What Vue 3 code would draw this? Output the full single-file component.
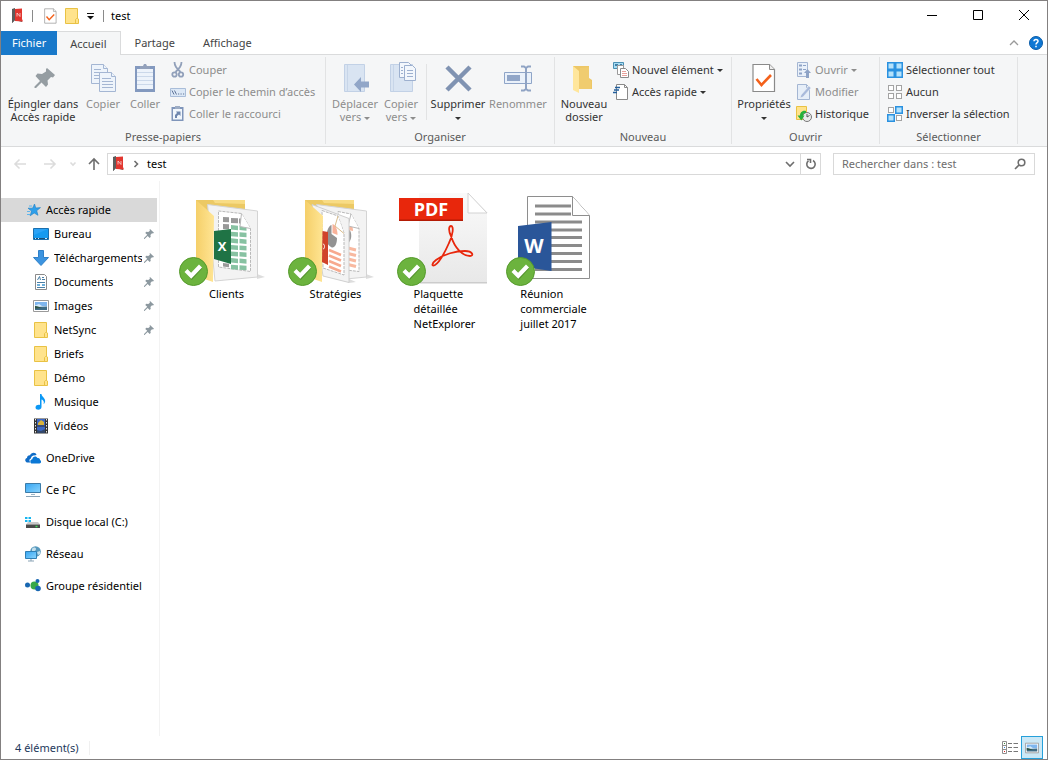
<template>
  <div class="window">
    <svg class="sprite" aria-hidden="true">
      <defs>
        <linearGradient id="g-folder" x1="0" y1="0" x2="1" y2="0">
          <stop offset="0" stop-color="#f5cf69" />
          <stop offset="1" stop-color="#ffe594" />
        </linearGradient>
        <linearGradient id="g-page" x1="0" y1="0" x2="0" y2="1">
          <stop offset="0" stop-color="#fafafa" />
          <stop offset="1" stop-color="#e8e8e8" />
        </linearGradient>
        <linearGradient id="g-screen" x1="0" y1="0" x2="1" y2="1">
          <stop offset="0" stop-color="#35a5f2" />
          <stop offset="1" stop-color="#8bd4fd" />
        </linearGradient>
      </defs>

      <symbol id="i-net" viewBox="0 0 12 16">
        <path d="M1 1l3-1v12l-3 3z" fill="#555" />
        <path d="M3 1h8v13L4 12l-3 3V2z" fill="#5d5d5d" />
        <path d="M4 1l7-.6V11l1 2.6L4 13z" fill="#e2362f" />
        <path d="M6 8.500V5l3 3.500V5" fill="none" stroke="#fff" stroke-opacity=".7" stroke-width=".9" />
      </symbol>
      <symbol id="i-folder" viewBox="0 0 14 16">
        <path d="M.5.5h12v10l1 .5v4.500H.5z" fill="#ffe38c" stroke="#e9c244" />
        <path d="M10.500 15V11.500l1-1h1" fill="none" stroke="#e9c244" />
      </symbol>
      <symbol id="i-check" viewBox="0 0 24 30">
        <path d="M1 1.500h16.500l5 5V28.500H1z" fill="#fff" stroke="#8a8a8a" stroke-width="1.200" />
        <path d="M17.500 1.500v5h5" fill="#eee" stroke="#8a8a8a" />
        <path d="M4.500 16l5 6L19 12" fill="none" stroke="#f4611b" stroke-width="2.600" />
      </symbol>
      <symbol id="i-pin" viewBox="0 0 20 20">
        <path d="M12 0l8 7.500-2 1.500-2-.3-3.200 3.300.7 3.500-2 2.500-4.200-4.200L1 19.800 0 20v-2l6.500-6.300L2.500 8l2-2.500 4 .7L12 3.500 11 2z" fill="#8c989f" />
      </symbol>
      <symbol id="i-ok" viewBox="0 0 29 29">
        <circle cx="14.500" cy="14.500" r="14" fill="#6cb33e" stroke="#559a2c" />
        <path d="M8 14l4.800 5.500L21.500 10" fill="none" stroke="#39701b" stroke-opacity=".5" stroke-width="4.500" />
        <path d="M7 13.500l5.200 5.200L21.500 9" fill="none" stroke="#fff" stroke-width="4.200" />
      </symbol>
      <symbol id="i-caret" viewBox="0 0 6 3">
        <path d="M0 0h6L3 3z" fill="currentColor" />
      </symbol>
      <symbol id="i-picture" viewBox="0 0 16 12">
        <path d="M.5.5h15v11H.5z" fill="#fff" stroke="#9a9a9a" />
        <path d="M2 2h12v4H2z" fill="#7fb6ee" />
        <path d="M2 5.500l4-1.500 3 2h5v1H2z" fill="#d6ebfa" />
        <path d="M2 6l3 1 9-.5V10H2z" fill="#3f6c86" />
        <path d="M2 6l3 .5 4 1.500-7 .5z" fill="#2f5545" />
      </symbol>
    </svg>

    <header class="titlebar">
      <svg class="logo" width="12" height="16"><use href="#i-net" /></svg>
      <span class="bar"></span>
      <button type="button" aria-label="Propriétés" class="quick">
        <svg width="13" height="16"><use href="#i-check" /></svg>
      </button>
      <button type="button" aria-label="Nouveau dossier" class="quick">
        <svg width="14" height="16"><use href="#i-folder" /></svg>
      </button>
      <button type="button" aria-label="Personnaliser" class="quick more">
        <svg width="7" height="7" viewBox="0 0 7 7">
          <path d="M0 .5h7" stroke="#111" />
          <path d="M0 3h7L3.500 6.500z" fill="#111" />
        </svg>
      </button>
      <span class="bar"></span>
      <h1>test</h1>
      <div class="controls">
        <button type="button" aria-label="Réduire">
          <svg width="12" height="12" viewBox="0 0 12 12"><path d="M1 5.500h10" /></svg>
        </button>
        <button type="button" aria-label="Agrandir">
          <svg width="12" height="12" viewBox="0 0 12 12"><path d="M1.500.5h9v9h-9z" /></svg>
        </button>
        <button type="button" aria-label="Fermer">
          <svg width="12" height="12" viewBox="0 0 12 12"><path d="M1 0l10 10M11 0L1 10" /></svg>
        </button>
      </div>
    </header>

    <nav class="tabs">
      <button
        v-for="tab in tabs"
        :key="tab"
        type="button"
        :class="{ file: tab === 'Fichier', active: tab === activeTab }"
        @click="selectTab(tab)"
      >
        {{ tab }}
      </button>
      <div class="tabs-end">
        <button type="button" aria-label="Réduire le ruban">
          <svg width="10" height="6" viewBox="0 0 10 6">
            <path d="M1 5l4-4 4 4" fill="none" stroke="#9a9a9a" stroke-width="1.300" />
          </svg>
        </button>
        <button type="button" aria-label="Aide">
          <svg width="14" height="14" viewBox="0 0 14 14">
            <circle cx="7" cy="7" r="6.500" fill="#0f78d4" stroke="#0a5ca8" />
            <path d="M5 5.300C5 3 9 3 9 5.200 9 6.800 7 6.600 7 8.600M7 9.700v1.500" fill="none" stroke="#fff" stroke-width="1.500" />
          </svg>
        </button>
      </div>
    </nav>

    <div class="ribbon">
      <section class="group clipboard">
        <div class="tools">
          <button type="button" class="large">
            <svg width="32" height="32" viewBox="0 0 32 32">
              <path d="M20 6l8 7-2 2.500-2-.4-3.500 3.400.5 4-2 2.500-4.500-4.500L9 26H7.500v-1.500l5.500-5.500L8.500 14l2-2.500 4.500.5L19 9.500V7z" fill="#959da2" />
            </svg>
            <span>Épingler dans<br />Accès rapide</span>
          </button>
          <button type="button" class="large" disabled>
            <svg width="32" height="32" viewBox="0 0 32 32">
              <g fill="#eef4fb" stroke="#a4b6d3">
                <path d="M4.500 2.500h12l4 4v15h-16z" />
                <path d="M16.500 2.500v4h4M7 7.500h7M7 10.500h6M7 13.500h6M7 16.500h6" />
                <path d="M12.500 10.500h12l4 4v15h-16z" />
                <path d="M24.500 10.500v4h4M15 16.500h9M15 19.500h11M15 22.500h11M15 25.500h11" />
              </g>
            </svg>
            <span>Copier</span>
          </button>
          <button type="button" class="large" disabled>
            <svg width="32" height="32" viewBox="0 0 32 32">
              <path d="M6 4h20v26H6z" fill="#8399bf" />
              <path d="M8 7h16v20H8z" fill="#edf3fb" />
              <path d="M8 10.500h16M8 14.500h16M8 18.500h16M8 22.500h16" stroke="#cbd8ea" />
              <path d="M11 7V4h3l1-2h2l1 2h3v3z" fill="#93a1bb" />
            </svg>
            <span>Coller</span>
          </button>
          <div class="stack">
            <button type="button" disabled>
              <svg width="16" height="16" viewBox="0 0 16 16" fill="none" stroke="#91a0ba">
                <path d="M4.500 0c0 4 2 6 6 10M11.500 0c0 4-2 6-6 10" stroke-width="1.800" />
                <circle cx="4.500" cy="12.500" r="2.200" stroke-width="1.800" />
                <circle cx="11" cy="12.500" r="2.200" stroke-width="1.800" />
              </svg>
              Couper
            </button>
            <button type="button" disabled>
              <svg width="16" height="16" viewBox="0 0 16 16">
                <path d="M.5 4.500h15v8H.5z" fill="#dce8f6" stroke="#a9bdd9" />
                <path d="M2 6.500l2 4M4.500 6.500l2 4M8 10h1.200M10.500 10h1.200M13 10h1.200" stroke="#5f7499" fill="none" />
              </svg>
              Copier le chemin d’accès
            </button>
            <button type="button" disabled>
              <svg width="16" height="16" viewBox="0 0 16 16">
                <path d="M1.500 1h12v14h-12z" fill="#7f95ba" />
                <path d="M3 3h9v10.500H3z" fill="#f1f6fc" />
                <path d="M5 0h5v3H5z" fill="#9dacc4" />
                <path d="M5 12V9l2-2-1-1.500h4.500V10L9 8.500 7 10v2z" fill="#6e86ae" />
              </svg>
              Coller le raccourci
            </button>
          </div>
        </div>
        <h2>Presse-papiers</h2>
      </section>

      <section class="group organize">
        <div class="tools">
          <button type="button" class="large" disabled>
            <svg width="32" height="32" viewBox="0 0 32 32">
              <path d="M5.500 2.500h20v27h-20z" fill="#d9e4f2" stroke="#c2d1e6" />
              <path d="M8.500 3v26" stroke="#c7d5e8" />
              <path d="M15 22.500l7-7.500v4.500h8v6h-8V30z" fill="#91a6c8" />
            </svg>
            <span>Déplacer<br />vers <svg class="caret"><use href="#i-caret" /></svg></span>
          </button>
          <button type="button" class="large" disabled>
            <svg width="32" height="32" viewBox="0 0 32 32">
              <path d="M5.500 2.500h22v27h-22z" fill="#d9e4f2" stroke="#c2d1e6" />
              <path d="M8.500 3v26" stroke="#c7d5e8" />
              <g fill="#f3f7fc" stroke="#9db0cf">
                <path d="M14.500.5h9l3 3v12h-12z" />
                <path d="M19.500 3.500h8l3 3v12h-11z" />
                <path d="M22 8.500h6M22 11.500h6M22 14.500h6M16 5.500h2M16 8.500h2M16 11.500h2" />
              </g>
            </svg>
            <span>Copier<br />vers <svg class="caret"><use href="#i-caret" /></svg></span>
          </button>
          <span class="divider"></span>
          <button type="button" class="large">
            <svg width="32" height="32" viewBox="0 0 32 32">
              <path d="M5 5l23 23M28 5L5 28" stroke="#8093b2" stroke-width="4.500" />
            </svg>
            <span>Supprimer<br /><svg class="caret"><use href="#i-caret" /></svg></span>
          </button>
          <button type="button" class="large" disabled>
            <svg width="32" height="32" viewBox="0 0 32 32">
              <path d="M2.500 10.500h27v11h-27z" fill="#eaf1fa" stroke="#8fa5c8" />
              <path d="M5 13h13v6H5z" fill="#91a6c8" />
              <path d="M19 4.500h3l2 1.500 2-1.500h3M24 6v21M19 28.500h3l2-1.500 2 1.500h3" fill="none" stroke="#8fa3c4" stroke-width="2" />
            </svg>
            <span>Renommer</span>
          </button>
        </div>
        <h2>Organiser</h2>
      </section>

      <section class="group create">
        <div class="tools">
          <button type="button" class="large">
            <svg width="32" height="32" viewBox="0 0 32 32">
              <path d="M5 4h16v12l3 2v9H5z" fill="#edc767" />
              <path d="M12 6l9-1v12l2 2v8H10z" fill="#f0cc6f" />
              <path d="M5 4l6 5v22l-6-3z" fill="#ffe69b" />
            </svg>
            <span>Nouveau<br />dossier</span>
          </button>
          <div class="stack">
            <button type="button">
              <svg width="16" height="16" viewBox="0 0 16 16">
                <path d="M.5.5h10v6H.5z" fill="#a8dcf3" stroke="#4a8fb3" />
                <path d="M2 2h3v2H2zM7 2h2v2H7z" fill="#3e7fa8" />
                <path d="M4.500 3.500h6v9h-6z" fill="#fff" stroke="#9a9a9a" />
                <path d="M7.500 6.500h5l3 3v6h-8z" fill="#fff" stroke="#8a8a8a" />
                <path d="M9 9.500h4M9 11.500h5M9 13.500h5" stroke="#e8a09a" />
              </svg>
              Nouvel élément
              <svg class="caret"><use href="#i-caret" /></svg>
            </button>
            <button type="button">
              <svg width="16" height="16" viewBox="0 0 16 16">
                <path d="M3.500.5h8l3 3v12h-11z" fill="#fff" stroke="#8a8a8a" />
                <path d="M11.500.5v3h3" fill="none" stroke="#8a8a8a" />
                <path d="M2 3.500h5M1 6h5M0 8.500h4" stroke="#235f9c" stroke-width="1.300" />
              </svg>
              Accès rapide
              <svg class="caret"><use href="#i-caret" /></svg>
            </button>
          </div>
        </div>
        <h2>Nouveau</h2>
      </section>

      <section class="group open">
        <div class="tools">
          <button type="button" class="large">
            <svg width="32" height="32" viewBox="-4 -1 32 32"><use href="#i-check" width="24" height="30" /></svg>
            <span>Propriétés<br /><svg class="caret"><use href="#i-caret" /></svg></span>
          </button>
          <div class="stack">
            <button type="button" disabled>
              <svg width="16" height="16" viewBox="0 0 16 16">
                <path d="M1.500.5h10v14h-10z" fill="#eaf1fa" stroke="#a4b6d3" />
                <path d="M3 2.500h3v2H3zM3 6.500h3v2H3zM3 10.500h3v2H3z" fill="#8ea3c6" />
                <path d="M7 3.500h3M7 7.500h3" stroke="#8ea3c6" />
                <path d="M11.500 7L15 11h-2v5h-3v-5H8z" fill="#8ea3c6" />
              </svg>
              Ouvrir
              <svg class="caret"><use href="#i-caret" /></svg>
            </button>
            <button type="button" disabled>
              <svg width="16" height="16" viewBox="0 0 16 16">
                <path d="M1.500.5h9l3 3v12h-12z" fill="#e6eef8" stroke="#a4b6d3" />
                <path d="M10.500.5v3h3" fill="none" stroke="#a4b6d3" />
                <path d="M4 14l1-3 8-9 2 2-8 9z" fill="#a9badb" stroke="#f5f6f7" stroke-width=".5" />
              </svg>
              Modifier
            </button>
            <button type="button">
              <svg width="16" height="16" viewBox="0 0 16 16">
                <path d="M.5.5h10v13H.5z" fill="#ffe38c" stroke="#e9c244" />
                <circle cx="11" cy="11" r="4.500" fill="#ececec" stroke="#777" />
                <path d="M11 8v3l2.500-1.500" fill="none" stroke="#555" />
                <path d="M10 5C6 4 4 7 4 9.500H1.500l3.800 5 3.200-5H7C7 8 8 6.800 10 7z" fill="#27b13a" />
              </svg>
              Historique
            </button>
          </div>
        </div>
        <h2>Ouvrir</h2>
      </section>

      <section class="group select">
        <div class="tools">
          <div class="stack">
            <button v-for="s in selections" :key="s.label" type="button">
              <svg width="16" height="16" viewBox="0 0 16 16">
                <rect
                  v-for="(on, i) in s.cells"
                  :key="i"
                  :x="(i % 2) * 8 + (on ? 0.75 : 1.5)"
                  :y="Math.floor(i / 2) * 8 + (on ? 0.75 : 1.5)"
                  :width="on ? 6.5 : 5"
                  :height="on ? 6.5 : 5"
                  :fill="on ? '#b5e2fb' : '#fff'"
                  :stroke="on ? '#2a91e0' : '#a3a3a3'"
                  :stroke-width="on ? 1.5 : 1"
                />
              </svg>
              {{ s.label }}
            </button>
          </div>
        </div>
        <h2>Sélectionner</h2>
      </section>
    </div>

    <div class="location">
      <button type="button" aria-label="Précédent" disabled>
        <svg width="14" height="12" viewBox="0 0 14 12"><path d="M13 6H2M6.500 1.500L2 6l4.500 4.500" /></svg>
      </button>
      <button type="button" aria-label="Suivant" disabled>
        <svg width="14" height="12" viewBox="0 0 14 12"><path d="M1 6h11M7.500 1.500L12 6l-4.500 4.500" /></svg>
      </button>
      <button type="button" aria-label="Emplacements récents" class="narrow" disabled>
        <svg width="8" height="6" viewBox="0 0 8 6"><path d="M1.500 1.500L4 4l2.500-2.500" /></svg>
      </button>
      <button type="button" aria-label="Dossier parent" class="up">
        <svg width="14" height="14" viewBox="0 0 14 14"><path d="M7 13V2M2 7l5-5 5 5" /></svg>
      </button>
      <div class="address">
        <svg width="12" height="16"><use href="#i-net" /></svg>
        <svg class="chevron" width="6" height="8" viewBox="0 0 6 8"><path d="M1.500 1l3 3-3 3" /></svg>
        <button type="button" class="crumb">test</button>
        <button type="button" class="history" aria-label="Afficher les emplacements">
          <svg width="10" height="8" viewBox="0 0 10 8"><path d="M1 2l4 4 4-4" /></svg>
        </button>
        <button type="button" class="refresh" aria-label="Actualiser">
          <svg width="12" height="12" viewBox="0 0 12 12">
            <path d="M8 2.500a4.200 4.200 0 1 1-4.500.3M2 1.500h3.500V5" />
          </svg>
        </button>
      </div>
      <div class="search">
        <input
          v-model="query"
          type="text"
          placeholder="Rechercher dans : test"
          aria-label="Rechercher dans : test"
        />
        <svg width="12" height="12" viewBox="0 0 12 12">
          <circle cx="7.500" cy="4.500" r="3.300" />
          <path d="M5 7L1 11" />
        </svg>
      </div>
    </div>

    <main class="content">
      <nav class="sidebar">
        <a href="#" class="current">
          <svg width="16" height="16" viewBox="0 0 16 16">
            <path d="M9.500 2l1.300 4 4.700-.4-3.800 3.100 1.300 4.600-3.800-2.300-4 2.800 1.300-4.800L3 6.200h4.600z" fill="#2e9fea" stroke="#1c7fc6" stroke-width=".6" />
            <path d="M4 4h3M2 9.500h3M2 12.500h3" stroke="#5fb5ec" />
          </svg>
          <span>Accès rapide</span>
        </a>
        <a v-for="item in places" :key="item.name" href="#" class="child">
          <svg v-if="item.icon === 'desktop'" width="16" height="16" viewBox="0 0 16 16">
            <path d="M.5 2.500h15v11H.5z" fill="#2ba3f6" stroke="#1b6fae" />
            <path d="M1 13V9l14-6v10z" fill="#159af0" />
            <path d="M1 12.500h14" stroke="#174e78" />
            <path d="M2 12.500h1M5 12.500h1M12 12.500h2" stroke="#cfe9fa" />
          </svg>
          <svg v-else-if="item.icon === 'download'" width="16" height="16" viewBox="0 0 16 16">
            <path d="M5.500.5h5v7h5L8 15.500.5 7.500h5z" fill="#3c94e0" stroke="#2f80c8" />
          </svg>
          <svg v-else-if="item.icon === 'document'" width="16" height="16" viewBox="0 0 16 16">
            <path d="M2.500.5h9l2 2v13h-11z" fill="#fff" stroke="#8a8a8a" />
            <path d="M4.500 6l2-3.500 1 3.500M9 3.500h2M9 5.500h3M4 8.500h8M4 13.500h8" stroke="#4a7fa5" fill="none" />
            <path d="M4 11h3M9 11h3" stroke="#3f97cf" stroke-width="1.500" />
          </svg>
          <svg v-else-if="item.icon === 'picture'" width="16" height="12"><use href="#i-picture" /></svg>
          <svg v-else-if="item.icon === 'music'" width="16" height="16" viewBox="0 0 16 16">
            <path d="M7 0h1.500c0 3 4.500 4 3.500 8-.3 1-1 2-1.500 2 1-3-.5-4-2-4.500V13c0 3.500-6 3.500-6 .5C2.500 11 5.500 10.500 7 11z" fill="#0b98f5" />
          </svg>
          <svg v-else-if="item.icon === 'video'" width="16" height="16" viewBox="0 0 16 16">
            <path d="M1 .5h14v15H1z" fill="#333" />
            <path d="M4 1h8v6.500H4zM4 8.500h8V15H4z" fill="#3c67c4" />
            <path d="M5 5l3-3 3 2v3H5z" fill="#d9b23a" />
            <path d="M4 12l4 1 4-2v4H4z" fill="#33486a" />
            <path d="M2.500 1v14M13.500 1v14" stroke="#e6e6e6" stroke-dasharray="1.500 1.500" />
          </svg>
          <svg v-else width="16" height="16" viewBox="-1 0 16 16"><use href="#i-folder" width="14" height="16" /></svg>
          <span>{{ item.name }}</span>
          <svg v-if="item.pinned" class="pin" width="10" height="10"><use href="#i-pin" /></svg>
        </a>

        <a href="#" class="root">
          <svg width="16" height="16" viewBox="0 0 16 16">
            <path d="M5.500 12.500H3C-.5 12.500-.5 8.500 2 8c0-2 2-3 3-2.500C6 2 11 2 11.500 5L9 5.500C6.500 5.500 6 8 6 8.500c-2 .5-2 3-.5 4z" fill="#0f6cc7" />
            <path d="M7 13.500c-2 0-2.500-4 .3-4.200C7.500 6 11.500 5.500 12.500 8c2-.3 2.500 1 2.500 2 1.500.5 1.500 3.500-.5 3.500z" fill="#0a78d6" />
          </svg>
          <span>OneDrive</span>
        </a>
        <a href="#" class="root">
          <svg width="16" height="16" viewBox="0 0 16 16">
            <path d="M.5 1.500h15v9H.5z" fill="url(#g-screen)" stroke="#3d7ca8" />
            <path d="M6 12.500h4" stroke="#9db5c6" />
            <path d="M1 14.500h14" stroke="#8aa3b5" />
          </svg>
          <span>Ce PC</span>
        </a>
        <a href="#" class="root">
          <svg width="16" height="16" viewBox="0 0 16 16">
            <path d="M0 3h2.500v2H0zM3.500 3H6v2H3.500zM0 6h2.500v2H0zM3.500 6H6v2H3.500z" fill="#16b5ef" />
            <path d="M3 8h10l2 2.500H1z" fill="#c9c9c9" />
            <path d="M1 10.500h14V14H1z" fill="#4a4a4a" />
            <path d="M10.500 12.500h2" stroke="#41dc5b" stroke-width="1.500" />
          </svg>
          <span>Disque local (C:)</span>
        </a>
        <a href="#" class="root">
          <svg width="16" height="16" viewBox="0 0 16 16">
            <circle cx="10.500" cy="5.500" r="5.300" fill="#5799bd" />
            <path d="M7 3c1-2 4-2 4 0s-2 2-4 3zM12 6l3-1v3l-2 1z" fill="#c4dfec" />
            <path d="M.5 5.500h11v7H.5z" fill="url(#g-screen)" stroke="#2f7fb5" />
            <path d="M3 15h6M6 13v2" stroke="#8aa3b5" />
          </svg>
          <span>Réseau</span>
        </a>
        <a href="#" class="root">
          <svg width="16" height="16" viewBox="0 0 16 16">
            <circle cx="2.500" cy="7" r="2.500" fill="#1867b1" />
            <circle cx="9.500" cy="7.500" r="4" fill="#37a847" />
            <circle cx="12.500" cy="3" r="2" fill="#1867b1" />
            <circle cx="13" cy="10.500" r="2.800" fill="#1867b1" />
          </svg>
          <span>Groupe résidentiel</span>
        </a>
      </nav>

      <ul class="files">
        <li v-for="file in files" :key="file.name">
          <svg v-if="file.kind === 'excel'" width="96" height="96" viewBox="0 0 96 96">
            <path d="M78 84l8 3-8 2z" fill="#ddd" />
            <path d="M17 10h49v60H17z" fill="#ecc964" />
            <path d="M34 10h32v4l-30-1z" fill="#f8dc85" />
            <path d="M28.500 14.500L78.500 21v66L36 91z" fill="#f3f3f3" stroke="#d4d4d4" />
            <path d="M39.500 21l23 2.500 9 15v43L39.500 77z" fill="#fff" stroke="#b9b9b9" stroke-dasharray="3 1" />
            <g fill="#999">
              <path d="M44 27l6 .2v5l-6-.2zM52 28l7 .2v5l-7-.2zM60 28.500h2v5h-2zM44 34l6 .2v5l-6-.2zM44 73l6 .8v3.500l-6-.8z" />
            </g>
            <g fill="#87c2a2">
              <path
                v-for="n in 7"
                :key="n"
                :d="`M52 ${28.500 + n * 6.600}l7 .6v4.500l-7-.6zM60.500 ${29 + n * 6.600}l7 .6v4.500l-7-.6z`"
              />
            </g>
            <path d="M62.500 23.500l-1.500 13 10.500 2" fill="#fff" stroke="#b9b9b9" />
            <path d="M17 10l18 16-1 66-17-6z" fill="url(#g-folder)" />
            <path d="M35 41l17-2v35l-17-5z" fill="#1f7345" />
            <text x="43" y="61" class="glyph excel">X</text>
            <use href="#i-ok" y="67" width="29" height="29" />
          </svg>
          <svg v-else-if="file.kind === 'slides'" width="96" height="96" viewBox="0 0 96 96">
            <path d="M78 84l8 3-8 2zM61 89l7 3-7 1z" fill="#ddd" />
            <path d="M17 10h49v60H17z" fill="#ecc964" />
            <path d="M34 10h32v4l-30-1z" fill="#f8dc85" />
            <path d="M28.500 14.500L78.500 21v66L58 89z" fill="#f3f3f3" stroke="#d4d4d4" />
            <path d="M50 21.500l13 2.500 8 14.500v43L58 80z" fill="#fff" stroke="#b9b9b9" stroke-dasharray="3 1" />
            <path d="M58 38c7 0 7 15 0 16z" fill="#999" />
            <path d="M60 32c4 2 5 6 5 9l-5-1z" fill="#f8b9a0" />
            <path d="M60 58l8 2M60 63.500l8 2M60 69l8 2M60 74.500l8 2" stroke="#f8b9a0" stroke-width="3" />
            <path d="M63 24l-3 12 11 2.500" fill="#fff" stroke="#b9b9b9" />
            <path d="M24 14.500l37 14v64L35 86z" fill="#f3f3f3" stroke="#cfcfcf" />
            <path d="M34 20.500l16 5.500 6 17v42l-21-7z" fill="#fff" stroke="#b9b9b9" stroke-dasharray="3 1" />
            <path d="M43.500 35v9l5.500 4c0 7-3 11-6 9-4-2-6-9-4-15 1-4 3-7 4.500-7z" fill="#939393" />
            <path d="M44.500 34c3 1 5 5 5 11l-5-2z" fill="#f8b29a" />
            <path d="M41 60l12 5M41 65.500l12 5M41 71l12 5M41 76.500l12 5" stroke="#f7a98e" stroke-width="2.500" />
            <path d="M50 26l-3 10 9 7.500" fill="#fff" stroke="#d9bd8c" />
            <path d="M17 10l18 16-1 66-17-6z" fill="url(#g-folder)" />
            <path d="M34.500 41l5.500 1v33l-6-3z" fill="#d0432a" />
            <path d="M35 54c2 0 2 5 0 5" fill="none" stroke="#fff" />
            <use href="#i-ok" y="67" width="29" height="29" />
          </svg>
          <svg v-else-if="file.kind === 'pdf'" width="96" height="96" viewBox="0 0 96 96">
            <path d="M23 3.500h48l19 19v71H23z" fill="#999" opacity=".5" />
            <path d="M22 3h49l19 20v69H22z" fill="url(#g-page)" />
            <path d="M71 3v20h19z" fill="#fff" stroke="#d2d2d2" />
            <path d="M2 8h64v23H2z" fill="#e8270c" />
            <path d="M2 29.500h64V31H2z" fill="#b31b05" />
            <text x="34" y="26" class="glyph pdf">PDF</text>
            <path
              d="M54 46c-3-6-2-10 0-10 3 0 2 9-2 17-4 9-9 19-14 22-4 2-3-2 1-5 8-6 20-9 29-9 8 0 9 5 5 5-7 0-15-7-19-20z"
              fill="none"
              stroke="#e8270c"
              stroke-width="1.800"
            />
            <use href="#i-ok" y="67" width="29" height="29" />
          </svg>
          <svg v-else width="96" height="96" viewBox="0 0 96 96">
            <path d="M21.500 6.500h45l17 19v63h-62z" fill="#fff" stroke="#8e8e8e" />
            <path d="M66.500 6.500v19h17" fill="#fff" stroke="#8e8e8e" />
            <path
              d="M29 16h36M29 24h36M29 32h47M29 40h47M29 47.500h47M29 55.500h47M29 63.500h47M29 71.500h47M29 79.500h47"
              stroke="#8b8b8b"
              stroke-width="3"
            />
            <path d="M12 36l33.500-4v49L12 76z" fill="#2a5699" />
            <text x="28" y="63" class="glyph word">W</text>
            <use href="#i-ok" y="67" width="29" height="29" />
          </svg>
          <span>{{ file.name }}</span>
        </li>
      </ul>
    </main>

    <footer class="status">
      <span class="count">{{ files.length }} élément(s)</span>
      <div class="views">
        <button type="button" aria-label="Détails">
          <svg width="16" height="13" viewBox="0 0 16 13">
            <path d="M.5.5h4v12h-4zM.5 4.500h4M.5 8.500h4" fill="#fff" stroke="#8f8f8f" />
            <path d="M6 2.500h4M11.500 2.500H16M6 6.500h4M11.500 6.500H16M6 10.500h4M11.500 10.500H16" stroke="#777" />
            <path d="M2 2h1v1H2z" fill="#3a8a3a" />
            <path d="M2 6h1v1H2z" fill="#2f7fd6" />
            <path d="M2 10h1v1H2z" fill="#d22" />
          </svg>
        </button>
        <button type="button" class="active" aria-label="Grandes icônes">
          <svg width="14" height="12"><use href="#i-picture" /></svg>
        </button>
      </div>
    </footer>
  </div>
</template>

<script setup>
import { ref } from "vue";

const tabs = ["Fichier", "Accueil", "Partage", "Affichage"];
const activeTab = ref("Accueil");
const query = ref("");

const selections = [
  { label: "Sélectionner tout", cells: [true, true, true, true] },
  { label: "Aucun", cells: [false, false, false, false] },
  { label: "Inverser la sélection", cells: [false, true, true, false] },
];

const places = [
  { name: "Bureau", icon: "desktop", pinned: true },
  { name: "Téléchargements", icon: "download", pinned: true },
  { name: "Documents", icon: "document", pinned: true },
  { name: "Images", icon: "picture", pinned: true },
  { name: "NetSync", icon: "folder", pinned: true },
  { name: "Briefs", icon: "folder" },
  { name: "Démo", icon: "folder" },
  { name: "Musique", icon: "music" },
  { name: "Vidéos", icon: "video" },
];

const files = [
  { name: "Clients", kind: "excel" },
  { name: "Stratégies", kind: "slides" },
  { name: "Plaquette\ndétaillée\nNetExplorer", kind: "pdf" },
  { name: "Réunion\ncommerciale\njuillet 2017", kind: "word" },
];

const selectTab = (tab) => {
  if (tab !== "Fichier") {
    activeTab.value = tab;
  }
};
</script>

<style>
body {
  margin: 0;
}
</style>

<style scoped>
* {
  box-sizing: border-box;
}
.window {
  display: flex;
  flex-direction: column;
  min-height: 100vh;
  border: 1px solid #838080;
  background-color: white;
  color: black;
  font-family: "Noto Sans", "Open Sans", sans-serif;
  font-size: 11px;
  line-height: 14px;
}
.sprite {
  position: absolute;
  width: 0;
  height: 0;
}
svg {
  flex: none;
}
button {
  display: flex;
  align-items: center;
  justify-content: center;
  padding: 0;
  border: none;
  background: none;
  color: inherit;
  font: inherit;
  white-space: nowrap;
}
h1,
h2 {
  margin: 0;
  font-size: 11px;
  font-weight: normal;
}

.titlebar {
  display: flex;
  align-items: center;
  height: 30px;
  padding-left: 10px;
}
.bar {
  width: 1px;
  height: 12px;
  margin: 0 7px 0 9px;
  background-color: #8a8a8a;
}
.quick {
  width: 20px;
  margin-right: 2px;
}
.quick.more {
  width: 13px;
  margin-right: -3px;
}
.controls {
  display: flex;
  align-self: stretch;
  margin-left: auto;
}
.controls button {
  width: 46px;
}
.controls svg {
  fill: none;
  stroke: #000;
}

.tabs {
  display: flex;
  height: 24px;
  border-bottom: 1px solid #dadbdc;
  color: #444;
}
.tabs > button {
  height: 24px;
  padding: 0 14px;
}
.tabs > button.file {
  padding: 0 11px;
  background-color: #1979ca;
  color: white;
}
.tabs > button.active {
  padding: 0 13px;
  border: solid #dadbdc;
  border-width: 1px 1px 0 0;
  background-color: #f5f6f7;
}
.tabs-end {
  display: flex;
  gap: 10px;
  margin-left: auto;
  padding-right: 4px;
}

.ribbon {
  display: flex;
  padding: 1px 0;
  border-bottom: 1px solid #dadbdc;
  background-color: #f5f6f7;
  color: #333;
}
.group {
  display: flex;
  flex: none;
  flex-direction: column;
  margin: 1px 0;
  border-right: 1px solid #e2e3e4;
}
.clipboard {
  width: 325px;
}
.organize {
  width: 229px;
}
.create {
  width: 177px;
}
.open {
  width: 148px;
}
.select {
  width: 138px;
}
.group h2 {
  color: #5a5a5a;
  text-align: center;
}
.tools {
  display: flex;
  height: 73px;
}
.large {
  flex-direction: column;
  justify-content: flex-start;
  gap: 3px;
  padding-top: 5px;
  line-height: 13px;
}
.clipboard .large {
  width: 42px;
}
.clipboard .large:first-child {
  width: 78px;
  margin-left: 3px;
}
.organize .large {
  width: 46px;
}
.organize .tools {
  padding-left: 6px;
}
.organize .divider ~ .large {
  width: 60px;
}
.create .large {
  width: 58px;
}
.open .large {
  width: 64px;
}
.divider {
  width: 1px;
  height: 56px;
  margin: 7px 1px 0 2px;
  background-color: #e2e3e4;
}
.stack {
  display: flex;
  flex-direction: column;
  padding-top: 2px;
}
.clipboard .stack {
  padding-left: 4px;
}
.select .stack {
  padding-left: 7px;
}
.stack button {
  justify-content: flex-start;
  gap: 3px;
  height: 22px;
}
.caret {
  width: 6px;
  height: 3px;
  vertical-align: middle;
}
button:disabled {
  color: #8d8d8d;
}

.location {
  display: flex;
  align-items: center;
  height: 34px;
  padding: 0 12px 0 4px;
}
.location svg {
  fill: none;
}
.location path,
.location circle {
  stroke: #6e6e6e;
  stroke-width: 1.600;
}
.location > button {
  width: 30px;
}
.location > button:disabled path {
  stroke: #dcdcdc;
}
.location > button.narrow {
  width: 16px;
}
.location > button.up {
  width: 26px;
}
.address,
.search {
  display: flex;
  align-items: center;
  height: 22px;
  border: 1px solid #d9d9d9;
}
.address {
  flex: 1;
  padding-left: 4px;
}
.chevron {
  margin: 0 8px 0 9px;
}
.history {
  width: 20px;
  margin-left: auto;
}
.refresh {
  align-self: stretch;
  width: 20px;
  border-left: 1px solid #d9d9d9;
}
.search {
  width: 202px;
  margin-left: 12px;
  padding: 0 8px;
}
.search input {
  flex: 1;
  min-width: 0;
  padding: 0;
  border: none;
  outline: none;
  background: none;
  font: inherit;
}
.search input::placeholder {
  color: #6d6d6d;
  opacity: 1;
}

.content {
  display: flex;
  flex: 1;
}
.sidebar {
  flex: none;
  width: 159px;
  padding: 17px 2px 0 0;
  border-right: 1px solid #f3f3f3;
}
.sidebar a {
  display: flex;
  align-items: center;
  gap: 5px;
  height: 24px;
  padding-left: 24px;
  color: black;
  text-decoration: none;
  white-space: nowrap;
}
.sidebar a.current {
  background-color: #d9d9d9;
}
.sidebar a.child {
  padding-left: 32px;
}
.sidebar a.child span {
  flex: 1;
  overflow: hidden;
}
.sidebar a.root {
  margin-top: 8px;
}
.pin {
  margin: 0 3px 0 -3px;
}

.files {
  display: flex;
  flex: 1;
  flex-wrap: wrap;
  align-content: flex-start;
  margin: 0;
  padding: 9px 12px;
  list-style: none;
}
.files li {
  display: flex;
  flex-direction: column;
  align-items: center;
  width: 109px;
}
.files span {
  line-height: 15px;
  white-space: pre-line;
}
.glyph {
  fill: white;
  font-family: "Open Sans", "Noto Sans", sans-serif;
  font-weight: bold;
  text-anchor: middle;
}
.excel {
  font-size: 13px;
}
.pdf {
  font-size: 18px;
}
.word {
  font-size: 20px;
}

.status {
  display: flex;
  align-items: center;
  height: 23px;
  padding: 0 4px 0 14px;
  color: #1e395b;
}
.count {
  padding-right: 10px;
  border-right: 1px solid #f0f0f0;
}
.views {
  display: flex;
  align-self: stretch;
  margin-left: auto;
}
.views button {
  width: 22px;
}
.views button.active {
  border: 1px solid #26a0da;
  background-color: #cbe8f6;
}
</style>
